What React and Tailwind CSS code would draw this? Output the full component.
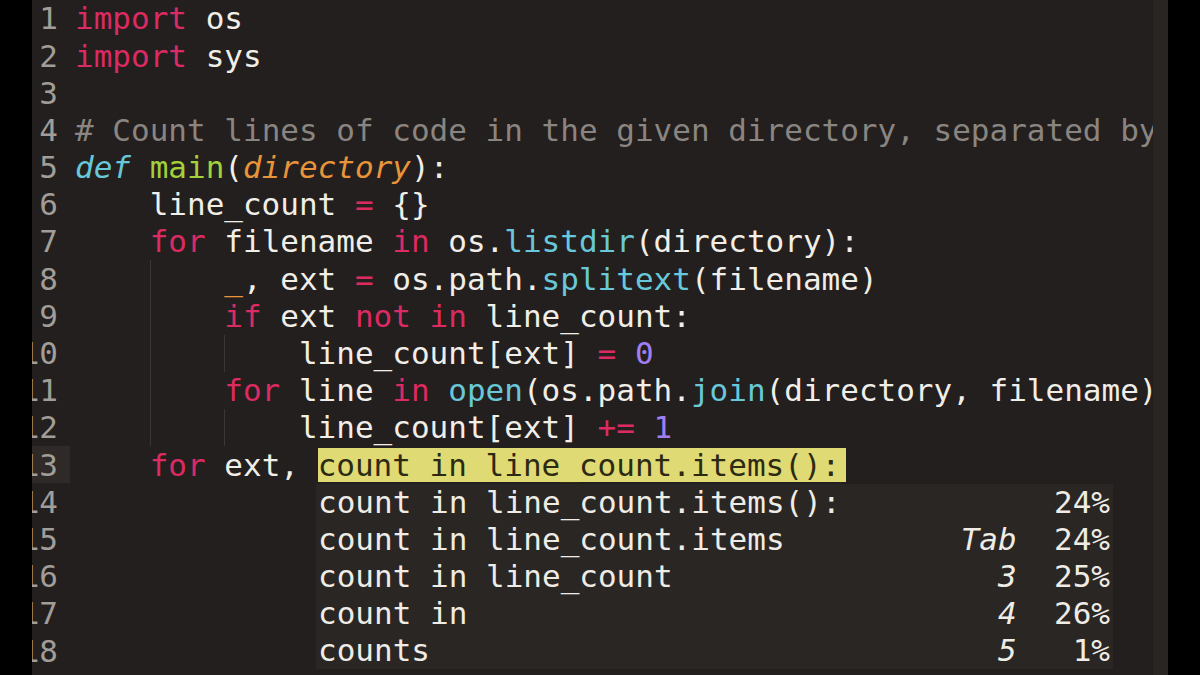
import React from "react";

const KW = "text-[#dc2a62]";
const CY = "text-[#68c8da]";
const GR = "text-[#a3d13a]";
const OR = "text-[#e8943a]";
const PU = "text-[#a07ff2]";
const CM = "text-[#8a8580]";

const lines = [
  { indent: 0, t: [[KW, "import"], ["", " os"]] },
  { indent: 0, t: [[KW, "import"], ["", " sys"]] },
  { indent: 0, t: [] },
  { indent: 0, t: [[CM, "# Count lines of code in the given directory, separated by file type."]] },
  { indent: 0, t: [[CY + " italic", "def"], ["", " "], [GR, "main"], ["", "("], [OR + " italic", "directory"], ["", "):"]] },
  { indent: 1, t: [["", "line_count "], [KW, "="], ["", " {}"]] },
  { indent: 1, t: [[KW, "for"], ["", " filename "], [KW, "in"], ["", " os."], [CY, "listdir"], ["", "(directory):"]] },
  { indent: 2, t: [[OR, "_"], ["", ", ext "], [KW, "="], ["", " os.path."], [CY, "splitext"], ["", "(filename)"]] },
  { indent: 2, t: [[KW, "if"], ["", " ext "], [KW, "not"], ["", " "], [KW, "in"], ["", " line_count:"]] },
  { indent: 3, t: [["", "line_count[ext] "], [KW, "="], ["", " "], [PU, "0"]] },
  { indent: 2, t: [[KW, "for"], ["", " line "], [KW, "in"], ["", " "], [CY, "open"], ["", "(os.path."], [CY, "join"], ["", "(directory, filename)):"]] },
  { indent: 3, t: [["", "line_count[ext] "], [KW, "+="], ["", " "], [PU, "1"]] },
  { indent: 1, t: [[KW, "for"], ["", " ext, "], ["hl", "count in line_count.items():"]] },
  { indent: 0, t: [] },
  { indent: 0, t: [] },
  { indent: 0, t: [] },
  { indent: 0, t: [] },
  { indent: 0, t: [] },
  { indent: 0, t: [] },
];

const items = [
  ["count in line_count.items():", "", "24%"],
  ["count in line_count.items", "Tab", "24%"],
  ["count in line_count", "3", "25%"],
  ["count in", "4", "26%"],
  ["counts", "5", "1%"],
];

function Line({ n, line }) {
  const current = n === 13;
  return (
    <div className="flex h-[37.2px] items-center whitespace-pre">
      <div
        className={`flex h-full w-[38px] shrink-0 items-center justify-end pr-[12px] text-[#a19d98] ${
          current ? "bg-[#2f2a28]" : ""
        }`}
      >
        {n}
      </div>
      <div className="flex h-full items-center pl-[5px] text-[#f1eee8]">
        {Array.from({ length: line.indent }).map((_, k) => (
          <span
            key={k}
            className={`inline-block h-full w-[4ch] ${k > 0 ? "shadow-[inset_1px_0_0_#3b3634]" : ""}`}
          />
        ))}
        {line.t.map(([cls, txt], i) =>
          cls === "hl" ? (
            <span
              key={i}
              className="flex h-[34px] items-center bg-[#e0da74] pr-[6px] text-[#2c2a12]"
            >
              {txt}
            </span>
          ) : (
            <span key={i} className={cls}>
              {txt}
            </span>
          )
        )}
      </div>
    </div>
  );
}

export default function App() {
  return (
    <div
      className="flex h-[675px] w-[1200px] overflow-hidden bg-black text-[31px]"
      style={{ fontFamily: '"DejaVu Sans Mono", "Liberation Mono", monospace' }}
    >
      <div className="w-[32px] shrink-0 bg-black" />
      <div className="relative flex h-full w-[1136px] shrink-0 overflow-hidden bg-[#231f1e]">
        <div className="flex w-[1121px] shrink-0 flex-col overflow-hidden">
          {lines.map((l, i) => (
            <Line key={i} n={i + 1} line={l} />
          ))}
        </div>
        <div className="h-full w-[15px] shrink-0 bg-[#292523]" />
        <div className="absolute left-[284px] top-[483.6px] flex w-[797px] flex-col bg-[#2a2624] pl-[2px] pr-[3px] text-[#efece6]">
          {items.map(([a, b, c], i) => (
            <div key={i} className="flex h-[37px] items-center whitespace-pre">
              <span className="flex-1">{a}</span>
              <span className="w-[4ch] text-right italic">{b}</span>
              <span className="w-[5ch] text-right">{c}</span>
            </div>
          ))}
        </div>
      </div>
      <div className="w-[32px] shrink-0 bg-black" />
    </div>
  );
}
